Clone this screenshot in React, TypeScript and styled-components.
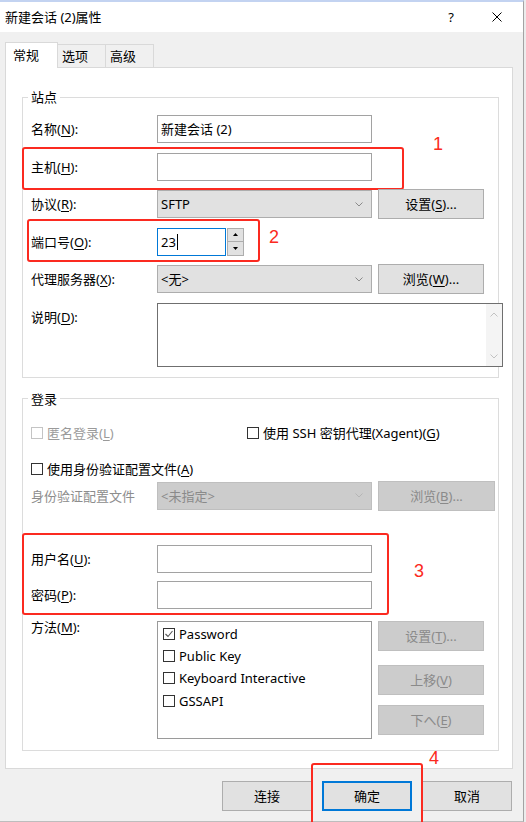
import React from "react";
import styled, { createGlobalStyle } from "styled-components";

const GlobalStyle = createGlobalStyle`
  html, body {
    margin: 0;
    padding: 0;
  }
  body {
    background: #ececec;
    font-family: "Noto Sans", "Noto Sans CJK SC", sans-serif;
    font-size: 13px;
    line-height: 18px;
    color: #000;
  }
  * {
    box-sizing: border-box;
  }
  u {
    text-underline-offset: 2px;
  }
`;

const Screen = styled.div`
  width: 526px;
  height: 822px;
  overflow: hidden;
  display: flex;
`;

const Window = styled.div`
  width: 524px;
  height: 822px;
  flex: none;
  display: flex;
  flex-direction: column;
  background: #f0f0f0;
  border-top: 2px solid #c3d3f1;
  border-right: 1px solid #a3a3a3;
  border-bottom: 1px solid #bdbdbd;
`;

const TitleBar = styled.header`
  height: 30px;
  flex: none;
  display: flex;
  align-items: center;
  background: #fff;
  padding-left: 5px;
`;

const Title = styled.div`
  flex: 1;
  white-space: nowrap;
`;

const CaptionButton = styled.div<{ $last?: boolean }>`
  width: 46px;
  height: 30px;
  display: flex;
  align-items: center;
  justify-content: center;
  margin-right: ${(p) => (p.$last ? 3 : 0)}px;
`;

const Body = styled.div`
  flex: 1;
  display: flex;
  flex-direction: column;
  padding: 10px 10px 0 5px;
`;

const TabStrip = styled.div`
  height: 26px;
  display: flex;
  align-items: flex-end;
  position: relative;
  z-index: 1;
  margin-bottom: -1px;
`;

const Tab = styled.div<{ $active?: boolean; $w: number }>`
  width: ${(p) => p.$w}px;
  height: ${(p) => (p.$active ? 26 : 24)}px;
  display: flex;
  align-items: center;
  padding-left: ${(p) => (p.$active ? 7 : 4)}px;
  padding-bottom: ${(p) => (p.$active ? 1 : 0)}px;
  background: ${(p) => (p.$active ? "#fff" : "#f0f0f0")};
  border: 1px solid #d9d9d9;
  border-bottom: ${(p) => (p.$active ? "none" : "1px solid #d9d9d9")};
  & + & {
    margin-left: -1px;
  }
`;

const TabPanel = styled.div`
  height: 702px;
  flex: none;
  display: flex;
  flex-direction: column;
  background: #fff;
  border: 1px solid #d9d9d9;
  padding: 20px 13px 0 16px;
`;

const Group = styled.fieldset<{ $pad: string; $mt?: number }>`
  margin: ${(p) => p.$mt ?? 0}px 0 0;
  padding: ${(p) => p.$pad};
  border: 1px solid #dcdcdc;
  min-width: 0;
`;

const Legend = styled.legend`
  padding: 0 3px;
  margin-left: -3px;
  line-height: 18px;
`;

const Stack = styled.div<{ $gap: number }>`
  display: flex;
  flex-direction: column;
  gap: ${(p) => p.$gap}px;
`;

const Row = styled.div<{ $h?: number; $mt?: number; $top?: boolean }>`
  position: relative;
  display: grid;
  grid-template-columns: 120px 215px auto;
  grid-template-rows: ${(p) => p.$h ?? 28}px;
  column-gap: 6px;
  align-items: ${(p) => (p.$top ? "start" : "center")};
  margin-top: ${(p) => p.$mt ?? 0}px;
`;

const Label = styled.span<{ $disabled?: boolean; $shift?: number }>`
  white-space: nowrap;
  color: ${(p) => (p.$disabled ? "#8d8d8d" : "#000")};
  margin-top: ${(p) => p.$shift ?? 0}px;
`;

const TextBox = styled.div<{ $focused?: boolean; $w?: number }>`
  height: 28px;
  width: ${(p) => (p.$w ? `${p.$w}px` : "auto")};
  display: flex;
  align-items: center;
  padding: 0 3px;
  background: #fff;
  border: 1px solid ${(p) => (p.$focused ? "#0078d7" : "#a2a2a2")};
  white-space: nowrap;
`;

const Caret = styled.span`
  display: inline-block;
  width: 1px;
  height: 16px;
  margin-left: 1px;
  background: #000;
`;

const PortField = styled.div`
  display: flex;
  gap: 1px;
  justify-self: start;
`;

const Spinner = styled.div`
  width: 17px;
  height: 28px;
  display: flex;
  flex-direction: column;
  background: #e1e1e1;
  border: 1px solid #adadad;
`;

const SpinHalf = styled.div`
  flex: 1;
  display: flex;
  align-items: center;
  justify-content: center;
  & + & {
    border-top: 1px solid #adadad;
  }
`;

const Combo = styled.div<{ $disabled?: boolean }>`
  height: 28px;
  display: flex;
  align-items: center;
  justify-content: space-between;
  padding: 0 8px 0 3px;
  background: ${(p) => (p.$disabled ? "#cccccc" : "#e1e1e1")};
  border: 1px solid ${(p) => (p.$disabled ? "#bfbfbf" : "#adadad")};
  color: ${(p) => (p.$disabled ? "#8a8a8a" : "#000")};
`;

const Button = styled.div<{
  $w?: number;
  $disabled?: boolean;
  $default?: boolean;
}>`
  width: ${(p) => p.$w ?? 106}px;
  height: 30px;
  display: flex;
  align-items: center;
  justify-content: center;
  white-space: nowrap;
  background: ${(p) => (p.$disabled ? "#cccccc" : "#e1e1e1")};
  border: 1px solid
    ${(p) => (p.$disabled ? "#bfbfbf" : p.$default ? "#0078d7" : "#adadad")};
  box-shadow: ${(p) => (p.$default ? "inset 0 0 0 1px #0078d7" : "none")};
  color: ${(p) => (p.$disabled ? "#8a8a8a" : "#000")};
`;

const Memo = styled.div`
  grid-column: 2 / span 2;
  width: 346px;
  height: 64px;
  display: flex;
  justify-content: flex-end;
  background: #fff;
  border: 1px solid #6f6f6f;
`;

const MemoScroll = styled.div`
  width: 16px;
  display: flex;
  flex-direction: column;
  align-items: center;
  justify-content: space-between;
  padding: 8px 0 7px;
  background: #f4f4f4;
`;

const CheckRow = styled.div<{ $mt?: number }>`
  display: grid;
  grid-template-columns: 216px auto;
  height: 20px;
  align-items: center;
  margin-top: ${(p) => p.$mt ?? 0}px;
`;

const CheckItem = styled.label<{ $disabled?: boolean }>`
  display: flex;
  align-items: center;
  gap: 4px;
  white-space: nowrap;
  color: ${(p) => (p.$disabled ? "#9a9a9a" : "#000")};
`;

const Box = styled.span<{ $disabled?: boolean }>`
  width: 12px;
  height: 12px;
  flex: none;
  display: inline-flex;
  align-items: center;
  justify-content: center;
  background: #fff;
  border: 1px solid ${(p) => (p.$disabled ? "#c4c4c4" : "#333")};
`;

const Marked = styled.div<{ $mt: number }>`
  position: relative;
  display: flex;
  flex-direction: column;
  margin-top: ${(p) => p.$mt}px;
`;

const ListBox = styled.div`
  height: 118px;
  padding: 1px 0 0 5px;
  background: #fff;
  border: 1px solid #9a9a9a;
`;

const ListItem = styled.div`
  height: 22.3px;
  display: flex;
  align-items: center;
  gap: 4px;
  white-space: nowrap;
`;

const ButtonStack = styled.div`
  display: flex;
  flex-direction: column;
  gap: 14px;
  & > :last-child {
    margin-top: -4px;
  }
`;

const ButtonRow = styled.div`
  display: flex;
  justify-content: flex-end;
  gap: 10px;
  margin-top: 12px;
  padding-right: 1px;
`;

const Anchor = styled.div`
  position: relative;
`;

const Annot = styled.div<{ $top: number; $left: number; $w: number; $h: number }>`
  position: absolute;
  top: ${(p) => p.$top}px;
  left: ${(p) => p.$left}px;
  width: ${(p) => p.$w}px;
  height: ${(p) => p.$h}px;
  border: 2px solid #fb2a20;
  border-radius: 3px;
  pointer-events: none;
`;

const AnnotNum = styled.span<{ $top: number; $left: number }>`
  position: absolute;
  top: ${(p) => p.$top}px;
  left: ${(p) => p.$left}px;
  font-family: "Liberation Sans", Arial, sans-serif;
  font-size: 18px;
  line-height: 20px;
  color: #fb2a20;
`;

const Chevron = ({ color = "#8a8a8a" }: { color?: string }) => (
  <svg width="8" height="5" viewBox="0 0 8 5">
    <path d="M0.5 0.5 L4 4 L7.5 0.5" fill="none" stroke={color} strokeWidth="1" />
  </svg>
);

const ChevronUp = () => (
  <svg width="8" height="5" viewBox="0 0 8 5">
    <path d="M0.5 4.5 L4 1 L7.5 4.5" fill="none" stroke="#c2c2c2" strokeWidth="1" />
  </svg>
);

const Tri = ({ down }: { down?: boolean }) => (
  <svg width="5" height="3" viewBox="0 0 5 3">
    <polygon points={down ? "0,0 5,0 2.5,3" : "0,3 5,3 2.5,0"} fill="#000" />
  </svg>
);

const Check = () => (
  <svg width="10" height="10" viewBox="0 0 10 10">
    <path d="M1.5 5 L4 7.5 L8.5 2" fill="none" stroke="#555" strokeWidth="1.1" />
  </svg>
);

const CloseIcon = () => (
  <svg width="10" height="10" viewBox="0 0 10 10">
    <path d="M0.5 0.5 L9.5 9.5 M9.5 0.5 L0.5 9.5" stroke="#000" strokeWidth="1" />
  </svg>
);

export default function App() {
  return (
    <>
      <GlobalStyle />
      <Screen>
        <Window>
          <TitleBar>
            <Title>新建会话 (2)属性</Title>
            <CaptionButton>?</CaptionButton>
            <CaptionButton $last>
              <CloseIcon />
            </CaptionButton>
          </TitleBar>

          <Body>
            <TabStrip>
              <Tab $active $w={53}>常规</Tab>
              <Tab $w={49}>选项</Tab>
              <Tab $w={49}>高级</Tab>
            </TabStrip>

            <TabPanel>
              <Group $pad="9px 8px 10px">
                <Legend>站点</Legend>
                <Stack $gap={9.5}>
                  <Row>
                    <Label>
                      名称(<u>N</u>):
                    </Label>
                    <TextBox>新建会话 (2)</TextBox>
                  </Row>
                  <Row>
                    <Label>
                      主机(<u>H</u>):
                    </Label>
                    <TextBox />
                    <Annot $top={-6} $left={-9} $w={382} $h={43} />
                    <AnnotNum $top={-19} $left={402}>1</AnnotNum>
                  </Row>
                  <Row>
                    <Label>
                      协议(<u>R</u>):
                    </Label>
                    <Combo>
                      SFTP
                      <Chevron />
                    </Combo>
                    <Button>
                      设置(<u>S</u>)...
                    </Button>
                  </Row>
                  <Row>
                    <Label>
                      端口号(<u>O</u>):
                    </Label>
                    <PortField>
                      <TextBox $focused $w={69}>
                        23
                        <Caret />
                      </TextBox>
                      <Spinner>
                        <SpinHalf>
                          <Tri />
                        </SpinHalf>
                        <SpinHalf>
                          <Tri down />
                        </SpinHalf>
                      </Spinner>
                    </PortField>
                    <Annot $top={-9} $left={-4} $w={233} $h={43} />
                    <AnnotNum $top={-1} $left={238}>2</AnnotNum>
                  </Row>
                  <Row>
                    <Label>
                      代理服务器(<u>X</u>):
                    </Label>
                    <Combo>
                      &lt;无&gt;
                      <Chevron />
                    </Combo>
                    <Button>
                      浏览(<u>W</u>)...
                    </Button>
                  </Row>
                  <Row $h={64} $top>
                    <Label $shift={5}>
                      说明(<u>D</u>):
                    </Label>
                    <Memo>
                      <MemoScroll>
                        <ChevronUp />
                        <Chevron color="#c2c2c2" />
                      </MemoScroll>
                    </Memo>
                  </Row>
                </Stack>
              </Group>

              <Group $pad="15px 8px 11px" $mt={12}>
                <Legend>登录</Legend>
                <CheckRow>
                  <CheckItem $disabled>
                    <Box $disabled />
                    <span>
                      匿名登录(<u>L</u>)
                    </span>
                  </CheckItem>
                  <CheckItem>
                    <Box />
                    <span>
                      使用 SSH 密钥代理(Xagent)(<u>G</u>)
                    </span>
                  </CheckItem>
                </CheckRow>
                <CheckRow $mt={16}>
                  <CheckItem>
                    <Box />
                    <span>
                      使用身份验证配置文件(<u>A</u>)
                    </span>
                  </CheckItem>
                </CheckRow>
                <Row $mt={3}>
                  <Label $disabled>身份验证配置文件</Label>
                  <Combo $disabled>
                    &lt;未指定&gt;
                    <Chevron color="#b5b5b5" />
                  </Combo>
                  <Button $disabled $w={117}>
                    浏览(<u>B</u>)...
                  </Button>
                </Row>

                <Marked $mt={35}>
                  <Row>
                    <Label>
                      用户名(<u>U</u>):
                    </Label>
                    <TextBox />
                  </Row>
                  <Row $mt={8}>
                    <Label>
                      密码(<u>P</u>):
                    </Label>
                    <TextBox />
                  </Row>
                  <Annot $top={-12} $left={-9} $w={367} $h={82} />
                  <AnnotNum $top={16} $left={383}>3</AnnotNum>
                </Marked>

                <Row $mt={12} $h={118} $top>
                  <Label $shift={-3}>
                    方法(<u>M</u>):
                  </Label>
                  <ListBox>
                    <ListItem>
                      <Box>
                        <Check />
                      </Box>
                      Password
                    </ListItem>
                    <ListItem>
                      <Box />
                      Public Key
                    </ListItem>
                    <ListItem>
                      <Box />
                      Keyboard Interactive
                    </ListItem>
                    <ListItem>
                      <Box />
                      GSSAPI
                    </ListItem>
                  </ListBox>
                  <ButtonStack>
                    <Button $disabled>
                      设置(<u>T</u>)...
                    </Button>
                    <Button $disabled>
                      上移(<u>V</u>)
                    </Button>
                    <Button $disabled>
                      下へ(<u>E</u>)
                    </Button>
                  </ButtonStack>
                </Row>
              </Group>
            </TabPanel>

            <ButtonRow>
              <Button $w={90}>连接</Button>
              <Anchor>
                <Button $w={90} $default>
                  确定
                </Button>
                <Annot $top={-18} $left={-11} $w={112} $h={72} />
                <AnnotNum $top={-33} $left={107}>4</AnnotNum>
              </Anchor>
              <Button $w={90}>取消</Button>
            </ButtonRow>
          </Body>
        </Window>
      </Screen>
    </>
  );
}
